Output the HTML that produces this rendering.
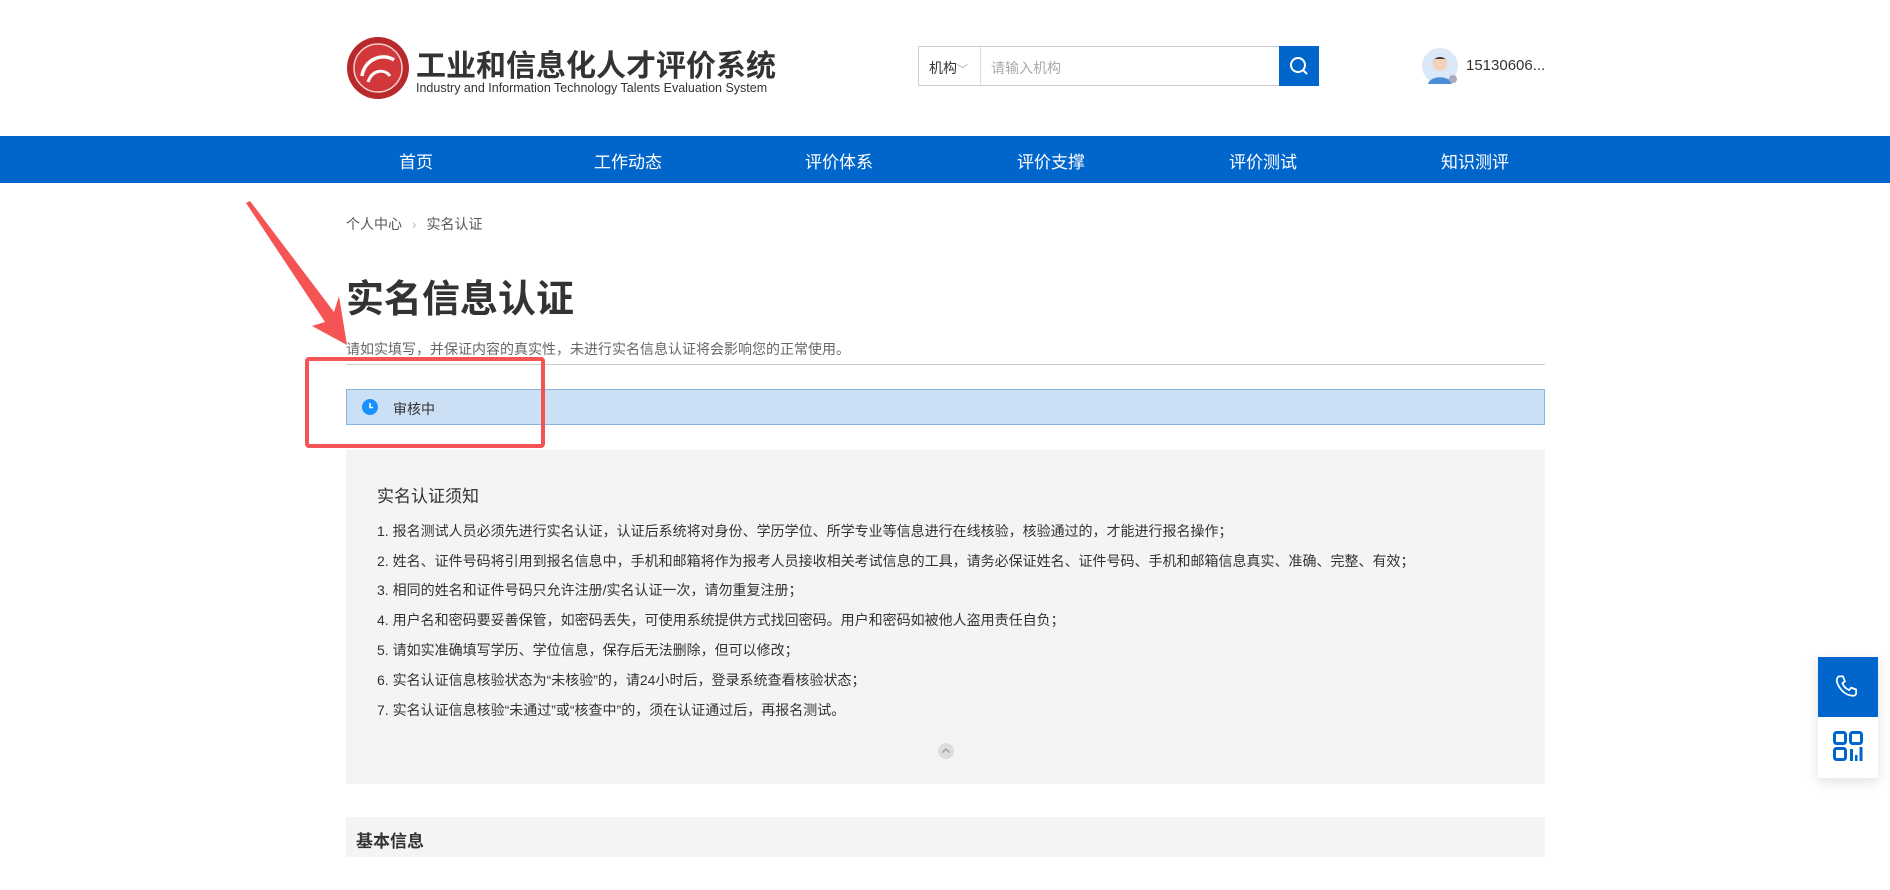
<!DOCTYPE html>
<html><head><meta charset="utf-8"><style>
*{margin:0;padding:0;box-sizing:border-box}
body{width:1890px;height:890px;overflow:hidden;background:#fff;font-family:"Liberation Sans","Noto Sans CJK SC",sans-serif;color:#333;position:relative}
.abs{position:absolute}
.nav{top:136px;left:0;width:1890px;height:47px;background:#0066cc}
.nav span{position:absolute;top:12px;color:#fff;font-size:17px;transform:translateX(-50%);white-space:nowrap}
.list div{position:absolute;left:377px;font-size:14px;color:#333;white-space:nowrap}
</style></head><body>
<svg class="abs" style="left:346px;top:36px" width="64" height="64" viewBox="0 0 64 64">
<circle cx="32" cy="32" r="31" fill="#b9282b"/><circle cx="32" cy="32" r="24" fill="#d2383a" stroke="#f3d0cf" stroke-width="1.5"/>
<path d="M16 40 C18 24 36 16 48 24" stroke="#fff" stroke-width="3.5" fill="none"/><path d="M22 46 C26 34 38 32 44 40" stroke="#fff" stroke-width="3" fill="none"/>
</svg>
<div class="abs" style="left:416px;top:41px;font-size:30px;font-weight:bold;color:#333">工业和信息化人才评价系统</div>
<div class="abs" style="left:416px;top:81px;font-size:12.5px;color:#333">Industry and Information Technology Talents Evaluation System</div>
<div class="abs" style="left:918px;top:46px;width:401px;height:40px;border:1px solid #ccc"></div>
<div class="abs" style="left:929px;top:58px;font-size:14px;color:#333">机构<span style="color:#aaa;font-size:11px">﹀</span></div>
<div class="abs" style="left:980px;top:47px;width:1px;height:38px;background:#ddd"></div>
<div class="abs" style="left:991px;top:58px;font-size:14px;color:#aaa">请输入机构</div>
<div class="abs" style="left:1279px;top:46px;width:40px;height:40px;background:#0066cc"></div>
<svg class="abs" style="left:1288px;top:55px" width="22" height="22" viewBox="0 0 22 22"><circle cx="10" cy="10" r="7" stroke="#fff" stroke-width="2" fill="none"/><path d="M15 15l4 4" stroke="#fff" stroke-width="2"/></svg>
<svg class="abs" style="left:1422px;top:48px" width="38" height="38" viewBox="0 0 38 38"><circle cx="18" cy="18" r="18" fill="#dbe8f7"/><path d="M6 36c2-9 22-9 24 0" fill="#4a8fd6"/><circle cx="18" cy="16" r="7" fill="#f6d3b8"/><path d="M11 15c0-8 14-8 14 0l-1-4h-12z" fill="#4a3426"/><circle cx="31" cy="31" r="4" fill="#aab"/></svg>
<div class="abs" style="left:1466px;top:57px;font-size:15px;color:#333">15130606...</div>
<div class="abs nav">
<span style="left:416px">首页</span><span style="left:628px">工作动态</span><span style="left:839px">评价体系</span><span style="left:1051px">评价支撑</span><span style="left:1263px">评价测试</span><span style="left:1475px">知识测评</span>
</div>
<div class="abs" style="left:346px;top:214px;font-size:14px;color:#555">个人中心 <span style="color:#bbb;margin:0 6px">›</span> 实名认证</div>
<div class="abs" style="left:346px;top:268px;font-size:38px;font-weight:bold;color:#333">实名信息认证</div>
<div class="abs" style="left:346px;top:339px;font-size:14px;color:#666">请如实填写，并保证内容的真实性，未进行实名信息认证将会影响您的正常使用。</div>
<div class="abs" style="left:346px;top:364px;width:1199px;height:1px;background:#ccc"></div>
<div class="abs" style="left:346px;top:389px;width:1199px;height:36px;background:#cce0f5;border:1px solid #8ab4e0"></div>
<svg class="abs" style="left:362px;top:399px" width="16" height="16" viewBox="0 0 16 16"><circle cx="8" cy="8" r="8" fill="#1890ff"/><path d="M8 4v4.5h3" stroke="#fff" stroke-width="1.6" fill="none"/></svg>
<div class="abs" style="left:393px;top:399px;font-size:14px;color:#333">审核中</div>
<div class="abs" style="left:346px;top:450px;width:1199px;height:334px;background:#f4f4f4"></div>
<div class="abs" style="left:377px;top:482px;font-size:17px;color:#333">实名认证须知</div>
<div class="list">
<div style="top:521px">1. 报名测试人员必须先进行实名认证，认证后系统将对身份、学历学位、所学专业等信息进行在线核验，核验通过的，才能进行报名操作；</div>
<div style="top:551px">2. 姓名、证件号码将引用到报名信息中，手机和邮箱将作为报考人员接收相关考试信息的工具，请务必保证姓名、证件号码、手机和邮箱信息真实、准确、完整、有效；</div>
<div style="top:580px">3. 相同的姓名和证件号码只允许注册/实名认证一次，请勿重复注册；</div>
<div style="top:610px">4. 用户名和密码要妥善保管，如密码丢失，可使用系统提供方式找回密码。用户和密码如被他人盗用责任自负；</div>
<div style="top:640px">5. 请如实准确填写学历、学位信息，保存后无法删除，但可以修改；</div>
<div style="top:670px">6. 实名认证信息核验状态为“未核验”的，请24小时后，登录系统查看核验状态；</div>
<div style="top:700px">7. 实名认证信息核验“未通过”或“核查中”的，须在认证通过后，再报名测试。</div>
</div>
<svg class="abs" style="left:937px;top:742px" width="18" height="18" viewBox="0 0 18 18"><circle cx="9" cy="9" r="8" fill="#ddd"/><path d="M5.5 10.5L9 7l3.5 3.5" stroke="#999" stroke-width="1.3" fill="none"/></svg>
<div class="abs" style="left:346px;top:817px;width:1199px;height:40px;background:#f4f4f4"></div>
<div class="abs" style="left:356px;top:827px;font-size:17px;font-weight:bold;color:#333">基本信息</div>
<div class="abs" style="left:1818px;top:657px;width:60px;height:121px;box-shadow:0 4px 12px rgba(0,0,0,.12);background:#fff"></div>
<div class="abs" style="left:1818px;top:657px;width:60px;height:60px;background:#0066cc"></div>
<svg class="abs" style="left:1833px;top:672px" width="30" height="30" viewBox="0 0 24 24"><path d="M5 3.5l3 0 1.5 4-2 1.5c1 2.5 3 4.5 5.5 5.5l1.5-2 4 1.5v3c0 1-1 2-2 2C10 19 5 14 3 7.5 3 5 4 3.5 5 3.5z" stroke="#fff" stroke-width="1.4" fill="none" stroke-linejoin="round"/></svg>
<svg class="abs" style="left:1833px;top:731px" width="30" height="30" viewBox="0 0 30 30"><rect x="1.5" y="1.5" width="11" height="11" rx="2" stroke="#0066cc" stroke-width="3" fill="none"/><rect x="17.5" y="1.5" width="11" height="11" rx="2" stroke="#0066cc" stroke-width="3" fill="none"/><rect x="1.5" y="17.5" width="11" height="11" rx="2" stroke="#0066cc" stroke-width="3" fill="none"/><rect x="17" y="18" width="3" height="12" fill="#0066cc"/><rect x="22" y="24" width="2.5" height="6" fill="#0066cc"/><rect x="26.5" y="16" width="3" height="14" fill="#0066cc"/></svg>
<div class="abs" style="left:305px;top:357px;width:240px;height:91px;border:4.5px solid #f55454;border-radius:4px"></div>
<svg class="abs" style="left:0;top:0" width="600" height="460" viewBox="0 0 600 460"><path d="M246 203 L250 201 L334 312 L339 296 L347 345 L312 326 L325 322 Z" fill="#f55454"/></svg>
</body></html>
